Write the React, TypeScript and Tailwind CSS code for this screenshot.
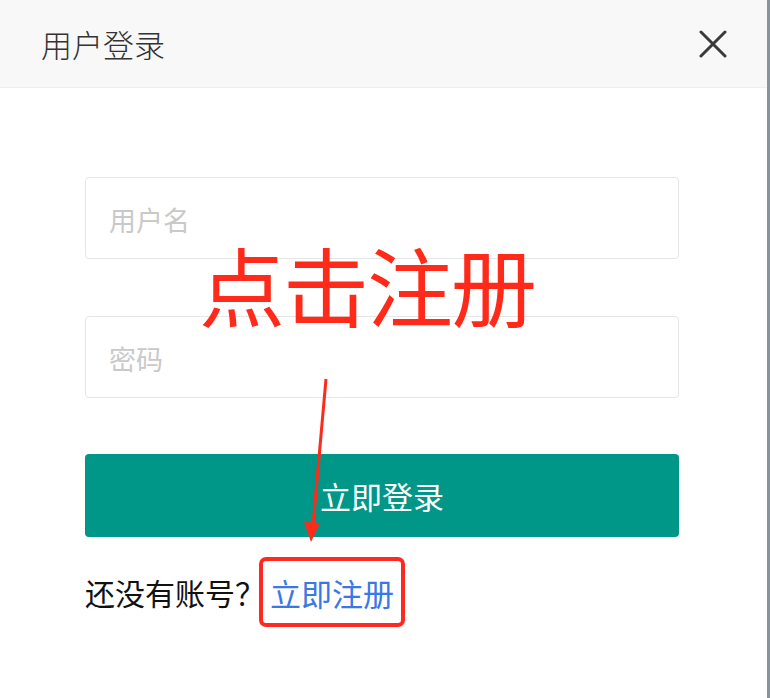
import React from 'react';

const font = { fontFamily: '"Noto Sans CJK SC", "Noto Sans", sans-serif' };

const CloseIcon = () => (
  <svg width="28" height="28" viewBox="0 0 28 28" className="text-[#3a3a3a]">
    <path d="M2 2 L26 26 M26 2 L2 26" stroke="currentColor" strokeWidth="3" strokeLinecap="round" />
  </svg>
);

const Field = ({ placeholder }: { placeholder: string }) => (
  <div className="h-[82px] rounded-[4px] border border-[#e6e6e6] bg-white flex items-center px-[23px]">
    <span className="text-[27px] text-[#c9c9c9] leading-none mt-[2px]">{placeholder}</span>
  </div>
);

export default function App() {
  return (
    <div className="w-[770px] h-[698px] flex bg-white overflow-hidden" style={font}>
      <div className="flex-1 flex flex-col relative">
        <div className="h-[88px] bg-[#f8f8f8] border-b border-[#eeeeee] flex items-center justify-between pl-[41px] pr-[40px] shrink-0">
          <span className="text-[31px] text-[#333] font-light leading-none">用户登录</span>
          <CloseIcon />
        </div>

        <div className="px-[85px] pr-[88px] pt-[89px] flex flex-col">
          <Field placeholder="用户名" />
          <div className="h-[57px]" />
          <Field placeholder="密码" />
          <div className="h-[56px]" />
          <button className="h-[83px] rounded-[4px] bg-[#009688] text-white text-[31px] leading-none">立即登录</button>
          <div className="mt-[20px] flex items-center h-[70px]">
            <span className="text-[30px] text-[#111] leading-none">还没有账号？</span>
            <span className="ml-[-6px] h-[70px] px-[7px] rounded-[7px] border-[4px] border-[#ff2a1f] flex items-center">
              <span className="text-[31px] text-[#3b78e7] leading-none">立即注册</span>
            </span>
          </div>
        </div>

        {/* annotation overlay */}
        <div className="absolute left-[199px] top-[241px] text-[86px] leading-none text-[#ff2a1a] tracking-[-2px]">点击注册</div>
        <svg className="absolute left-0 top-0 pointer-events-none" width="767" height="698">
          <line x1="326" y1="379" x2="313" y2="525" stroke="#ff2a1a" strokeWidth="3" />
          <polygon points="304,522 320,523 311,542" fill="#ff2a1a" />
        </svg>
      </div>
      <div className="w-[3px] bg-[#8a9399]" />
    </div>
  );
}
